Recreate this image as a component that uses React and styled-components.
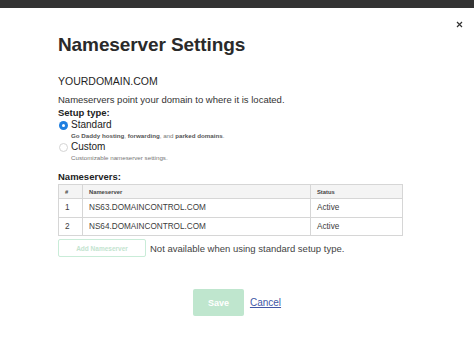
import React from 'react'
import styled, { createGlobalStyle } from 'styled-components'

const GlobalStyle = createGlobalStyle`
  * {
    box-sizing: border-box;
  }
  body {
    margin: 0;
    background: #fff;
    font-family: "Liberation Sans", Arial, sans-serif;
    color: #2b2b2b;
  }
`

const TopBar = styled.div`
  height: 8px;
  background: #333333;
`

const Modal = styled.div`
  position: relative;
  padding: 25px 0 0 58px;
`

const Close = styled.button`
  position: absolute;
  top: 11px;
  right: 10px;
  border: 0;
  background: none;
  padding: 0;
  width: 10px;
  height: 10px;
  display: flex;
  align-items: center;
  justify-content: center;
  cursor: pointer;
`

const Title = styled.h1`
  margin: 0;
  font-size: 19px;
  line-height: 24px;
  font-weight: 700;
  color: #2a2a2a;
  letter-spacing: -0.1px;
`

const Domain = styled.div`
  margin-top: 17px;
  font-size: 10.5px;
  line-height: 14px;
  color: #1f1f1f;
`

const Text = styled.div`
  margin-top: ${(p) => p.$top || 0}px;
  font-size: ${(p) => p.$size || 9.5}px;
  line-height: ${(p) => p.$lh || 13}px;
  font-weight: ${(p) => (p.$bold ? 700 : 400)};
  color: ${(p) => p.$color || '#333'};
`

const Option = styled.label`
  display: grid;
  grid-template-columns: 13px 1fr;
  align-items: center;
  margin-top: ${(p) => p.$top || 0}px;
`

const Radio = styled.span`
  width: 9px;
  height: 9px;
  border-radius: 50%;
  margin-left: 1px;
  background: ${(p) => (p.$checked ? '#1f7fe0' : '#fff')};
  border: ${(p) => (p.$checked ? 'none' : '1px solid #d4d4d4')};
  display: flex;
  align-items: center;
  justify-content: center;
  &::after {
    content: '';
    width: 3px;
    height: 3px;
    border-radius: 50%;
    background: #fff;
    display: ${(p) => (p.$checked ? 'block' : 'none')};
  }
`

const OptionLabel = styled.span`
  font-size: 10px;
  line-height: 12px;
  color: #222;
`

const OptionHint = styled.div`
  grid-column: 2;
  font-size: 6.2px;
  line-height: 9px;
  color: #777;
  b {
    color: #555;
  }
`

const Table = styled.table`
  width: 345px;
  border-collapse: collapse;
  margin-top: 1px;
  th,
  td {
    border: 1px solid #d6d6d6;
    text-align: left;
    padding: 0 6px;
  }
  th {
    background: #f4f4f4;
    height: 14px;
    font-size: 5.8px;
    font-weight: 700;
    color: #444;
  }
  td {
    height: 18.5px;
    font-size: 8.2px;
    color: #3c3c3c;
  }
`

const Actions = styled.div`
  display: flex;
  align-items: center;
  gap: 4px;
  margin-top: 3px;
`

const AddButton = styled.button`
  width: 88px;
  height: 18px;
  border: 1px solid #c9ecd8;
  border-radius: 2px;
  background: #fff;
  color: #c3e4cf;
  font-family: inherit;
  font-size: 6.5px;
  font-weight: 700;
  padding: 0;
`

const Note = styled.span`
  font-size: 9.5px;
  color: #444;
`

const Footer = styled.div`
  display: flex;
  justify-content: center;
  align-items: center;
  gap: 6px;
  margin: 32px 0 0 -58px;
`

const SaveButton = styled.button`
  width: 51px;
  height: 27px;
  border: 0;
  border-radius: 2px;
  background: #bfe6ce;
  color: #fff;
  font-family: inherit;
  font-size: 9px;
  font-weight: 700;
`

const CancelLink = styled.a`
  font-size: 10px;
  color: #4257a6;
  text-decoration: underline;
  margin-bottom: 1px;
`

const rows = [
  ['1', 'NS63.DOMAINCONTROL.COM', 'Active'],
  ['2', 'NS64.DOMAINCONTROL.COM', 'Active'],
]

function App() {
  return (
    <>
      <GlobalStyle />
      <TopBar />
      <Modal>
        <Close aria-label="Close">
          <svg width="7" height="7" viewBox="0 0 7 7">
            <path d="M1 1L6 6M6 1L1 6" stroke="#333" strokeWidth="1.2" />
          </svg>
        </Close>
        <Title>Nameserver Settings</Title>
        <Domain>YOURDOMAIN.COM</Domain>
        <Text $top={5}>Nameservers point your domain to where it is located.</Text>
        <Text $bold $color="#222">Setup type:</Text>
        <Option>
          <Radio $checked />
          <OptionLabel>Standard</OptionLabel>
          <OptionHint>
            <b>Go Daddy hosting</b>, <b>forwarding</b>, and <b>parked domains</b>.
          </OptionHint>
        </Option>
        <Option $top={1}>
          <Radio />
          <OptionLabel>Custom</OptionLabel>
          <OptionHint>Customizable nameserver settings.</OptionHint>
        </Option>
        <Text $top={9} $bold $color="#222" $lh={12}>Nameservers:</Text>
        <Table>
          <thead>
            <tr>
              <th style={{ width: 24 }}>#</th>
              <th style={{ width: 228 }}>Nameserver</th>
              <th>Status</th>
            </tr>
          </thead>
          <tbody>
            {rows.map((r) => (
              <tr key={r[0]}>
                <td>{r[0]}</td>
                <td>{r[1]}</td>
                <td>{r[2]}</td>
              </tr>
            ))}
          </tbody>
        </Table>
        <Actions>
          <AddButton disabled>Add Nameserver</AddButton>
          <Note>Not available when using standard setup type.</Note>
        </Actions>
        <Footer>
          <SaveButton disabled>Save</SaveButton>
          <CancelLink href="#">Cancel</CancelLink>
        </Footer>
      </Modal>
    </>
  )
}

export default App
